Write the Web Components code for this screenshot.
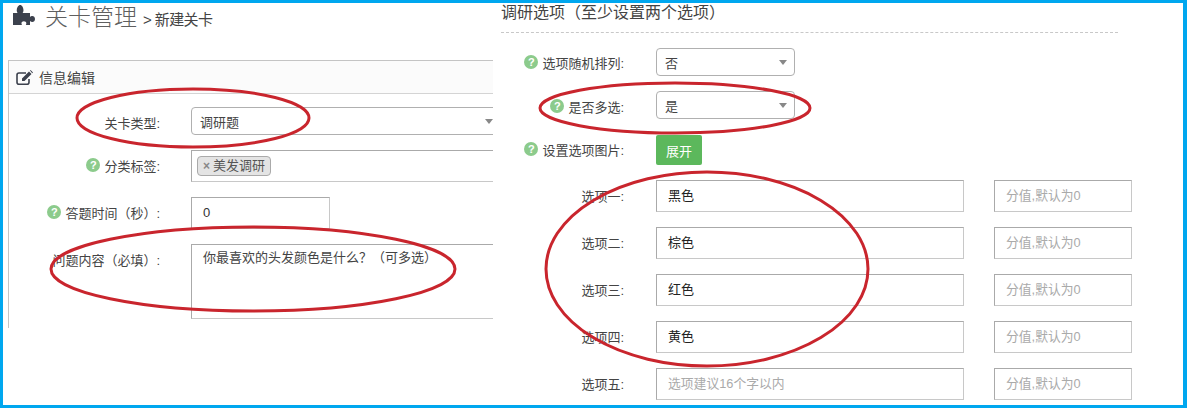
<!DOCTYPE html>
<html lang="zh">
<head>
<meta charset="utf-8">
<title>关卡管理</title>
<style>
html, body { margin: 0; background: #fff; }
body {
	font-family: "Liberation Sans", "Noto Sans CJK SC", sans-serif;
	font-size: 13px;
	color: #444;
	text-spacing-trim: space-all;
}
</style>
</head>
<body>
<quiz-frame>
	<div slot="left">
		<page-title heading="关卡管理" sub="&gt; 新建关卡"></page-title>
		<info-panel heading="信息编辑">
			<form-row label="关卡类型:" label-height="30" label-over="2"><select-box value="调研题" wide></select-box></form-row>
			<form-row label="分类标签:" help>
				<text-box wide height="32"><tag-chip>美发调研</tag-chip></text-box>
			</form-row>
			<form-row label="答题时间（秒）:" help><text-box width="139" height="32" tone="#333">0</text-box></form-row>
			<form-row label="问题内容（必填）:"><text-box wide height="75" top>你最喜欢的头发颜色是什么？（可多选）</text-box></form-row>
		</info-panel>
	</div>
	<option-panel slot="right" heading="调研选项（至少设置两个选项）">
		<form-row label="选项随机排列:" help label-height="28"><select-box value="否" width="139"></select-box></form-row>
		<form-row label="是否多选:" help label-height="30" label-over="2"><select-box value="是" width="139"></select-box></form-row>
		<form-row label="设置选项图片:" help label-height="28" class="btn-row"><green-button>展开</green-button></form-row>
		<form-row label="选项一:"><option-inputs value="黑色"></option-inputs></form-row>
		<form-row label="选项二:"><option-inputs value="棕色"></option-inputs></form-row>
		<form-row label="选项三:"><option-inputs value="红色"></option-inputs></form-row>
		<form-row label="选项四:"><option-inputs value="黄色"></option-inputs></form-row>
		<form-row label="选项五:"><option-inputs></option-inputs></form-row>
	</option-panel>
	<annot-marks slot="marks"></annot-marks>
</quiz-frame>

<script>
class QuizFrame extends HTMLElement {
	connectedCallback() {
		this.attachShadow({ mode: 'open' }).innerHTML = `
<style>
:host {
	display: grid;
	grid-template-columns: 490px 1fr;
	box-sizing: border-box;
	width: 1187px;
	height: 408px;
	position: relative;
	overflow: hidden;
	border: solid #00a7ef;
	border-width: 3px 4px 3px 3px;
	background: #fff;
}
.left { overflow: hidden; padding-left: 5px; }
</style>
<div class="left"><slot name="left"></slot></div>
<div><slot name="right"></slot></div>
<slot name="marks"></slot>`;
	}
}

class PageTitle extends HTMLElement {
	connectedCallback() {
		this.attachShadow({ mode: 'open' }).innerHTML = `
<style>
:host { display: flex; align-items: center; height: 57px; box-sizing: border-box; padding: 0 0 29px 5px; color: #5f5f5f; }
svg { width: 22px; height: 21px; margin: -3px 10px 0 0; }
h1 { margin: 0; font-size: 23px; font-weight: 300; line-height: 25px; }
span { margin-left: 6px; font-size: 15px; color: #444; line-height: 25px; padding-top: 4px; letter-spacing: -.6px; }
</style>
<svg viewBox="0 0 22 21"><path fill="#3c414d" d="M0 8h4.600C3.800 6.800 3.600 5.800 3.800 4.500 4 2.800 5.300 0 7.200 0s3 2.800 3.200 4.500c.2 1.300 0 2.300-.8 3.500H17v4c.6-.8 1.500-1 2.300-1 1.500 0 2.700 1.300 2.700 3s-1.200 3-2.700 3c-.8 0-1.700-.3-2.300-1v4h-4.200c.5-.7.6-1.300.5-2-.1-1.100-1.100-1.800-2.400-1.800s-2.300.7-2.400 1.800c-.1.700 0 1.300.5 2H0z"/></svg>
<h1>${this.getAttribute('heading')}</h1><span>${this.getAttribute('sub')}</span>`;
	}
}

class InfoPanel extends HTMLElement {
	connectedCallback() {
		this.attachShadow({ mode: 'open' }).innerHTML = `
<style>
:host {
	display: block;
	box-sizing: border-box;
	height: 268px;
	border-top: 1px solid #c4c4c4;
	border-left: 1px solid #c4c4c4;
	--label-w: 151px;
	--label-gap: 31px;
}
header {
	display: flex;
	align-items: center;
	height: 32px;
	padding-left: 7px;
	border-bottom: 1px solid #d4d4d4;
	background: #fbfbfb;
	font-size: 14px;
	color: #444;
}
svg { width: 17px; height: 15px; margin-right: 6px; }
.body { display: grid; row-gap: 15px; padding-top: 13px; }
</style>
<header>
	<svg viewBox="0 0 17 15">
		<path fill="none" stroke="#3c414d" stroke-width="1.600" d="M13 9v3.200a2 2 0 0 1-2 2H3a2 2 0 0 1-2-2V5a2 2 0 0 1 2-2h7"/>
		<path fill="#3c414d" d="M6 8.500 13 1.500l2.500 2.500-7 7H6zM14 .6l.6-.6 2.400 2.400-.8.8z"/>
	</svg>
	${this.getAttribute('heading')}
</header>
<div class="body"><slot></slot></div>`;
	}
}

class OptionPanel extends HTMLElement {
	connectedCallback() {
		this.attachShadow({ mode: 'open' }).innerHTML = `
<style>
:host { display: block; --label-w: 131px; --label-gap: 32px; }
h2 {
	box-sizing: border-box;
	width: 617px;
	height: 30px;
	margin: 0 0 15px 8px;
	border-bottom: 1px dashed #c8c8c8;
	font-size: 16px;
	font-weight: 400;
	line-height: 20px;
	color: #444;
}
.body { display: grid; row-gap: 15px; }
::slotted(.btn-row) { margin-top: 1px; }
</style>
<h2>${this.getAttribute('heading')}</h2>
<div class="body"><slot></slot></div>`;
	}
}

class FormRow extends HTMLElement {
	connectedCallback() {
		const labelHeight = this.getAttribute('label-height') || 30;
		const labelOver = this.getAttribute('label-over') || 0;
		const help = this.hasAttribute('help') ? '<help-icon></help-icon>' : '';
		this.attachShadow({ mode: 'open' }).innerHTML = `
<style>
:host {
	display: grid;
	grid-template-columns: var(--label-w) minmax(0, 1fr);
	column-gap: var(--label-gap);
	align-items: start;
}
.label {
	display: flex;
	justify-content: flex-end;
	align-items: center;
	gap: 4px;
	height: ${labelHeight}px;
	margin-bottom: -${labelOver}px;
	white-space: nowrap;
	font-size: 13px;
	color: #444;
}
</style>
<div class="label">${help}<span>${this.getAttribute('label')}</span></div>
<div><slot></slot></div>`;
	}
}

class HelpIcon extends HTMLElement {
	connectedCallback() {
		this.attachShadow({ mode: 'open' }).innerHTML = `
<style>
:host {
	display: block;
	width: 14px;
	height: 14px;
	border-radius: 50%;
	background: #8ccb8c;
	color: #fff;
	font: bold 11px/14px "Liberation Sans", sans-serif;
	text-align: center;
}
</style>?`;
	}
}

class SelectBox extends HTMLElement {
	connectedCallback() {
		const wide = this.hasAttribute('wide');
		this.attachShadow({ mode: 'open' }).innerHTML = `
<style>
:host {
	display: flex;
	align-items: center;
	box-sizing: border-box;
	width: ${wide ? 'auto' : this.getAttribute('width') + 'px'};
	margin-right: ${wide ? '-8px' : '0'};
	height: 28px;
	padding: 0 8px;
	border: 1px solid #b0b0b0;
	border-radius: 4px;
	background: #fff;
	font-size: 13px;
	color: #444;
}
span { flex: 1; }
i { width: 0; height: 0; border: solid transparent; border-width: 5px 4px 0; border-top-color: #888; margin-right: -1px; }
</style>
<span>${this.getAttribute('value')}</span><i></i>`;
	}
}

class TextBox extends HTMLElement {
	connectedCallback() {
		const wide = this.hasAttribute('wide');
		const top = this.hasAttribute('top');
		this.attachShadow({ mode: 'open' }).innerHTML = `
<style>
:host {
	display: flex;
	align-items: ${top ? 'flex-start' : 'center'};
	box-sizing: border-box;
	width: ${wide ? 'auto' : this.getAttribute('width') + 'px'};
	margin-right: ${wide ? '-8px' : '0'};
	height: ${this.getAttribute('height')}px;
	padding: ${top ? '3px' : '0'} 11px 0;
	border: 1px solid #c8c8c8;
	border-top-color: #aaa;
	border-left-color: #aaa;
	background: #fff;
	font-size: 13px;
	line-height: 20px;
	color: ${this.getAttribute('tone') || '#444'};
	white-space: nowrap;
}
</style>
<slot></slot>`;
	}
}

class TagChip extends HTMLElement {
	connectedCallback() {
		this.attachShadow({ mode: 'open' }).innerHTML = `
<style>
:host {
	display: flex;
	align-items: center;
	box-sizing: border-box;
	height: 20px;
	margin-left: -6px;
	padding: 0 5px;
	border: 1px solid #aaa;
	border-radius: 4px;
	background: #e4e4e4;
	font-size: 13px;
	color: #555;
}
b { margin-right: 3px; font-size: 12px; color: #888; }
</style>
<b>×</b><slot></slot>`;
	}
}

class GreenButton extends HTMLElement {
	connectedCallback() {
		this.attachShadow({ mode: 'open' }).innerHTML = `
<style>
:host {
	display: flex;
	align-items: center;
	justify-content: center;
	box-sizing: border-box;
	width: 46px;
	height: 30px;
	border-radius: 2px;
	background: #5cb85c;
	color: #fff;
	font-size: 13px;
}
</style>
<slot></slot>`;
	}
}

class OptionInputs extends HTMLElement {
	connectedCallback() {
		const value = this.getAttribute('value');
		this.attachShadow({ mode: 'open' }).innerHTML = `
<style>
:host { display: flex; gap: 30px; }
.hint { color: #aaa; font-size: 12.800px; }
</style>
<text-box width="308" height="32" tone="#222">${value || '<span class="hint">选项建议16个字以内</span>'}</text-box>
<text-box width="138" height="32"><span class="hint">分值,默认为0</span></text-box>`;
	}
}

class AnnotMarks extends HTMLElement {
	connectedCallback() {
		this.attachShadow({ mode: 'open' }).innerHTML = `
<style>
:host { position: absolute; left: -3px; top: -3px; width: 1187px; height: 408px; pointer-events: none; }
svg { display: block; }
ellipse { fill: none; stroke: #c9252d; stroke-width: 3; }
</style>
<svg width="1187" height="408">
	<ellipse cx="193" cy="118" rx="116" ry="29"/>
	<ellipse cx="253" cy="269" rx="202" ry="42"/>
	<ellipse cx="675" cy="108" rx="135" ry="25"/>
	<ellipse cx="707" cy="269" rx="161" ry="97"/>
</svg>`;
	}
}

window.customElements.define('quiz-frame', QuizFrame);
window.customElements.define('page-title', PageTitle);
window.customElements.define('info-panel', InfoPanel);
window.customElements.define('option-panel', OptionPanel);
window.customElements.define('form-row', FormRow);
window.customElements.define('help-icon', HelpIcon);
window.customElements.define('select-box', SelectBox);
window.customElements.define('text-box', TextBox);
window.customElements.define('tag-chip', TagChip);
window.customElements.define('green-button', GreenButton);
window.customElements.define('option-inputs', OptionInputs);
window.customElements.define('annot-marks', AnnotMarks);
</script>
</body>
</html>
